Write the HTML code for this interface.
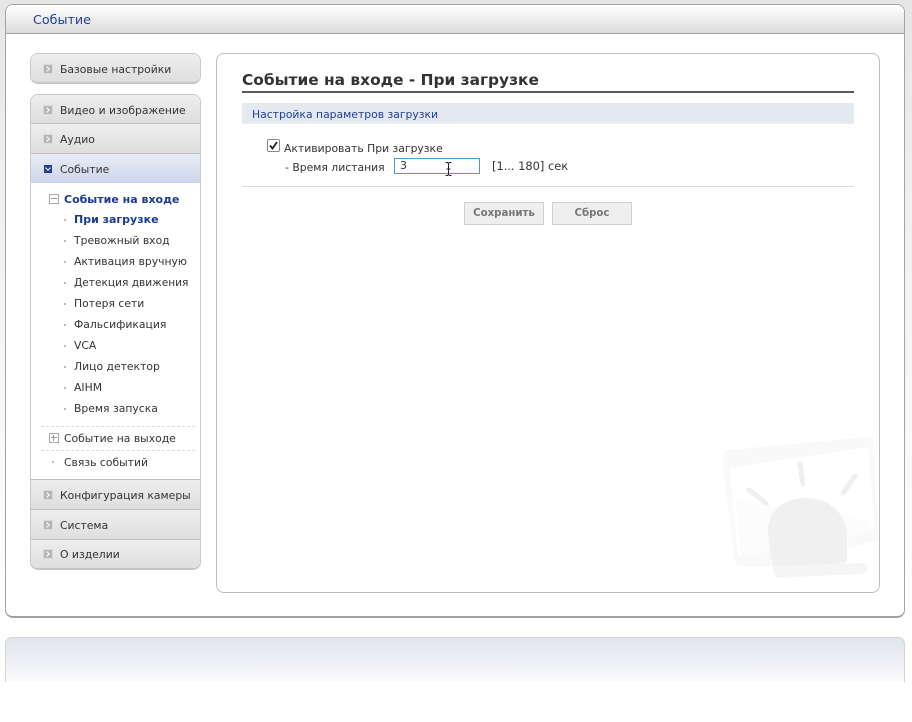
<!DOCTYPE html>
<html lang="ru">
<head>
<meta charset="utf-8">
<title>Событие</title>
<style>
html,body{margin:0;padding:0;background:#fff}
body{position:relative;width:912px;height:722px;overflow:hidden;font-family:"DejaVu Sans","Liberation Sans",sans-serif;font-size:10.8px;color:#333}
.abs,.t{position:absolute}
.t{white-space:nowrap;line-height:14px}
#bg{left:0;top:0;width:912px;height:640px;background:linear-gradient(#e6e6e6,#f4f4f4 300px,#fff 620px)}
#panel{left:5px;top:4px;width:898px;height:611px;background:#fff;border:1px solid #a4a4a4;border-bottom:2px solid #a0a0a0;border-radius:8px;overflow:hidden}
#hdr{left:0;top:0;width:100%;height:28px;background:linear-gradient(#fff,#dcdcdc);border-bottom:1px solid #a2a2a2}
.grp{position:absolute;left:30px;width:169px;border:1px solid #c8c8c8;border-bottom:2px solid #c6c6c6;border-radius:8px;overflow:hidden;background:#fff}
.row{position:absolute;left:0;width:100%;background:linear-gradient(#eeeeee,#dedede);border-top:1px solid #c0c0c0}
.row.first{border-top:0}
.row.blue{background:linear-gradient(#e9edf7,#cdd5ea)}
.ic{position:absolute;left:43px;width:8px;height:8px;background:#b6b6b6;border:1px solid #dcdcdc;box-sizing:content-box}
.ic:after{content:"";position:absolute;left:1px;top:2px;width:3px;height:3px;border-top:1px solid #fff;border-right:1px solid #fff;transform:rotate(45deg)}
.ic.blue{background:#1f3f9a}
.ic.blue:after{left:2px;top:1px;transform:rotate(135deg)}
.dot{position:absolute;width:2px;height:2px;background:#bbb}
.sq{position:absolute;left:49px;width:8px;height:8px;border:1px solid #aaa;background:#fff}
.sq:before{content:"";position:absolute;left:1px;top:3px;width:6px;height:1px;background:#999}
.sq.plus:after{content:"";position:absolute;left:3px;top:1px;width:1px;height:6px;background:#999}
.dash{position:absolute;left:41px;width:154px;border-top:1px dashed #dcdcdc}
#main{left:216px;top:53px;width:662px;height:538px;border:1px solid #bdbdbd;border-radius:8px;background:#fff}
.btn{position:absolute;top:202px;width:78px;height:21px;background:#eee;border:1px solid #d0d0d0;color:#777;font-weight:bold;font-size:10.2px;text-align:center;line-height:22px}
.b{color:#1c3a92;font-weight:bold;font-size:11px}
</style>
</head>
<body>
<div class="abs" id="bg"></div>
<div class="abs" id="panel"><div class="abs" id="hdr"></div></div>
<div class="t" style="left:33px;top:13px;font-size:12.7px;color:#1f3f9a">Событие</div>

<div class="grp" style="top:53px;height:28px"><div class="row first" style="top:0;height:28px;border-radius:7px"></div></div>
<div class="ic" style="top:64px"></div>
<div class="t" style="left:60px;top:63px">Базовые настройки</div>

<div class="grp" style="top:94px;height:473px">
  <div class="row first" style="top:0;height:28px"></div>
  <div class="row" style="top:28px;height:29px"></div>
  <div class="row blue" style="top:58px;height:29px"></div>
  <div class="row" style="top:384px;height:29px"></div>
  <div class="row" style="top:414px;height:29px"></div>
  <div class="row" style="top:444px;height:29px"></div>
</div>
<div class="ic" style="top:105px"></div><div class="t" style="left:60px;top:104px">Видео и изображение</div>
<div class="ic" style="top:134px"></div><div class="t" style="left:60px;top:133px">Аудио</div>
<div class="ic blue" style="top:164px"></div><div class="t" style="left:60px;top:163px">Событие</div>

<div class="sq" style="top:194px"></div>
<div class="t b" style="left:64px;top:193px">Событие на входе</div>
<div class="dot" style="left:64px;top:219px"></div><div class="t b" style="left:74px;top:213px">При загрузке</div>
<div class="dot" style="left:64px;top:240px"></div><div class="t" style="left:74px;top:234px">Тревожный вход</div>
<div class="dot" style="left:64px;top:261px"></div><div class="t" style="left:74px;top:255px">Активация вручную</div>
<div class="dot" style="left:64px;top:282px"></div><div class="t" style="left:74px;top:276px;font-size:10.6px">Детекция движения</div>
<div class="dot" style="left:64px;top:303px"></div><div class="t" style="left:74px;top:297px">Потеря сети</div>
<div class="dot" style="left:64px;top:324px"></div><div class="t" style="left:74px;top:318px">Фальсификация</div>
<div class="dot" style="left:64px;top:345px"></div><div class="t" style="left:74px;top:339px">VCA</div>
<div class="dot" style="left:64px;top:366px"></div><div class="t" style="left:74px;top:360px">Лицо детектор</div>
<div class="dot" style="left:64px;top:387px"></div><div class="t" style="left:74px;top:381px">AIHM</div>
<div class="dot" style="left:64px;top:408px"></div><div class="t" style="left:74px;top:402px">Время запуска</div>
<div class="dash" style="top:426px"></div>
<div class="sq plus" style="top:433px"></div><div class="t" style="left:64px;top:432px">Событие на выходе</div>
<div class="dash" style="top:450px"></div>
<div class="dot" style="left:52px;top:461px"></div><div class="t" style="left:64px;top:456px">Связь событий</div>

<div class="ic" style="top:490px"></div><div class="t" style="left:60px;top:489px">Конфигурация камеры</div>
<div class="ic" style="top:520px"></div><div class="t" style="left:60px;top:519px">Система</div>
<div class="ic" style="top:549px"></div><div class="t" style="left:60px;top:548px">О изделии</div>

<div class="abs" id="main"></div>

<svg class="abs" style="left:715px;top:430px" width="170" height="160" viewBox="715 430 170 160">
  <path d="M728 450 L868 437 Q873 437 873 442 L879 540 L836 552 L770 567 L742 566 Q735 566 734 558 L722 456 Q722 451 728 450 Z M730 468 L738 556 L836 543 L875 528 L868 447 Z" fill="#f9f9f9" fill-rule="evenodd"/>
  <path d="M736 500 L868 520 L870 530 L836 543 L741 556 Z" fill="#fcfcfc"/>
  <g stroke="#efefef" stroke-width="5" stroke-linecap="round" fill="none">
    <path d="M749 490 L766 503"/>
    <path d="M800 464 L803 484"/>
    <path d="M855 476 L843 493"/>
  </g>
  <path d="M768 528 C770 508 787 498 806 498 C828 498 846 512 847 535 L847 562 L775 574 C772 560 768 545 768 528 Z" fill="#f0f0f0"/>
  <path d="M772 566 L862 563 Q868 565 868 570 Q866 574 860 574 L776 578 Z" fill="#f5f5f5"/>
</svg>

<div class="t" style="left:242px;top:71px;font-size:15.4px;line-height:18px;font-weight:bold;color:#333">Событие на входе - При загрузке</div>
<div class="abs" style="left:242px;top:91px;width:612px;height:2px;background:#5a5a5a"></div>
<div class="abs" style="left:242px;top:103px;width:612px;height:21px;background:#e4e8f1;border-bottom:1px solid #eceef4;box-sizing:border-box"></div>
<div class="t" style="left:252px;top:108px;color:#1f3f9a">Настройка параметров загрузки</div>

<div class="abs" style="left:267px;top:139px;width:11px;height:11px;border:1px solid #888;border-radius:2px;background:#fff"></div>
<svg class="abs" style="left:267px;top:139px" width="13" height="13" viewBox="0 0 13 13"><path d="M3 6.5 L5.5 9.5 L10 3" fill="none" stroke="#222" stroke-width="1.8"/></svg>
<div class="t" style="left:284px;top:142px">Активировать При загрузке</div>
<div class="t" style="left:285px;top:161px">- Время листания</div>
<div class="abs" style="left:394px;top:158px;width:84px;height:14px;border:1px solid #4d9fc4;background:#fff"></div>
<div class="t" style="left:400px;top:159px;font-size:11px">3</div>
<svg class="abs" style="left:443px;top:160px" width="12" height="18" viewBox="0 0 12 18"><path d="M2.5 2.5 H4.5 L5.5 3.5 L6.5 2.5 H8.5 M5.5 3.5 V14.5 M2.5 15.5 H4.5 L5.5 14.5 L6.5 15.5 H8.5 M3.5 9 H7.5" fill="none" stroke="#222" stroke-width="1"/></svg>
<div class="t" style="left:492px;top:159px;font-size:11.4px">[1... 180] сек</div>
<div class="abs" style="left:242px;top:186px;width:612px;height:1px;background:#dcdcdc"></div>
<div class="btn" style="left:464px">Сохранить</div>
<div class="btn" style="left:552px">Сброс</div>

<div class="abs" style="left:5px;top:637px;width:898px;height:45px;border:1px solid #d4d4d4;border-bottom:0;border-radius:7px 7px 0 0;background:linear-gradient(#e3e5ee,#e8eaf1 30%,#fdfdfe)"></div>
<div class="abs" style="left:0;top:682px;width:912px;height:40px;background:#fff"></div>
</body>
</html>
